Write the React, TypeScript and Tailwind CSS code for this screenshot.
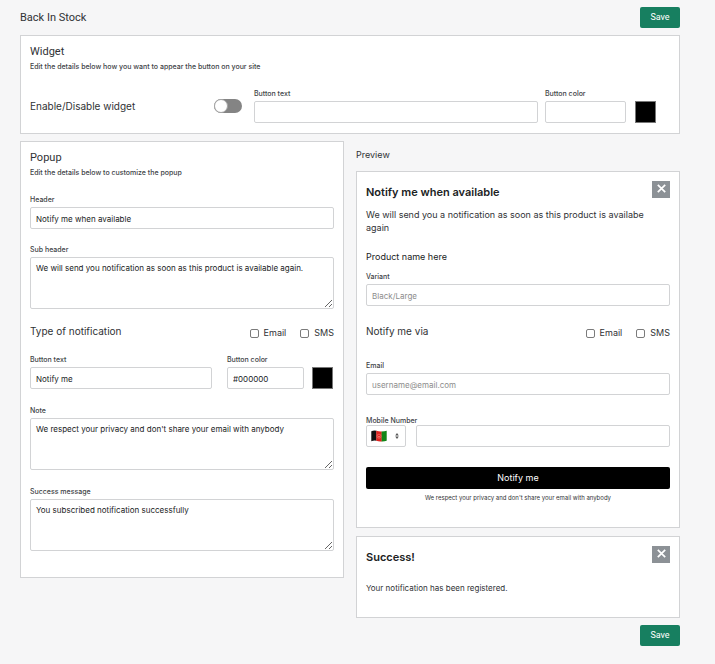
import React from "react";

const control =
  "block h-[22px] w-full rounded-[2px] border border-[#d2d3d5] bg-white px-[5px] pt-[2px] text-[8px] leading-[18px] text-[#202223] outline-none placeholder:text-[#8c8c8c]";
const card = "border border-[#d2d3d5] bg-white px-[9px] pt-[9px]";
const heading = "font-['Roboto',sans-serif] text-[11px] leading-[14px]";
const small = "text-[7px] leading-[10px] font-medium text-[#404346]";

function Field({
  id,
  label,
  className = "",
  ...rest
}: { id: string; label: string } & React.InputHTMLAttributes<HTMLInputElement>) {
  return (
    <div className={className}>
      <label htmlFor={id} className={`mb-[2px] block ${small}`}>
        {label}
      </label>
      <input id={id} type="text" className={control} {...rest} />
    </div>
  );
}

function Area({ id, label, value }: { id: string; label: string; value: string }) {
  return (
    <div className="mt-4">
      <label htmlFor={id} className={`mb-[2px] block ${small}`}>
        {label}
      </label>
      <textarea
        id={id}
        defaultValue={value}
        className="block h-[52px] w-full resize rounded-[2px] border border-[#d2d3d5] bg-white px-[5px] py-[5px] text-[8px] leading-[11px] text-[#202223] outline-none"
      />
    </div>
  );
}

function Swatch({ label }: { label: string }) {
  return (
    <input
      type="color"
      aria-label={label}
      defaultValue="#000000"
      className="block h-[22px] w-[21px] shrink-0 appearance-none border-0 bg-transparent p-0 [&::-webkit-color-swatch-wrapper]:p-0 [&::-webkit-color-swatch]:rounded-none [&::-webkit-color-swatch]:border [&::-webkit-color-swatch]:border-[#777777]"
    />
  );
}

function Tick({ label }: { label: string }) {
  return (
    <label className="flex items-center gap-[5px] text-[9px] leading-[14px]">
      <input
        type="checkbox"
        className="h-[9px] w-[9px] appearance-none rounded-[2px] border border-[#7b7b7b] bg-white checked:bg-[#177f60]"
      />
      {label}
    </label>
  );
}

function Channels({ title, className }: { title: string; className: string }) {
  return (
    <fieldset className={`flex items-start justify-between ${className}`}>
      <span className="text-[10px] leading-[14px]">{title}</span>
      <div className="mt-[2px] flex gap-[14px]">
        <Tick label="Email" />
        <Tick label="SMS" />
      </div>
    </fieldset>
  );
}

function SaveButton() {
  return (
    <button
      type="button"
      className="h-[21px] w-10 rounded-[2px] bg-[#177f60] pb-[2px] font-['Roboto',sans-serif] text-[9px] leading-[14px] text-white"
    >
      Save
    </button>
  );
}

function CloseButton() {
  return (
    <button type="button" aria-label="Close" className="flex h-[17px] w-[18px] shrink-0 justify-center bg-[#8c9196] pt-[3px]">
      <svg viewBox="0 0 9 9" className="h-[9px] w-[9px]" fill="none" stroke="white" strokeWidth="1.7">
        <path d="M0.8 0.8 8.2 8.2M8.2 0.8 0.8 8.2" />
      </svg>
    </button>
  );
}

function Flag() {
  return (
    <svg viewBox="0 0 16 12" className="pointer-events-none absolute top-[5px] left-[5px] h-3 w-4">
      <path d="M0.3 1.2Q3 .2 5.5 .8V10.8Q3 10.3 .3 11.2Z" fill="#111" />
      <path d="M5.3.8Q8 1.7 10.8 1.5V11.4Q8 11.7 5.3 10.8Z" fill="#e0231f" />
      <path d="M10.6 1.5Q13.5 1.5 15.7.8V10.8Q13.5 11.5 10.6 11.4Z" fill="#128516" />
      <circle cx="8" cy="6.2" r="2" fill="none" stroke="#ee6a62" strokeWidth="0.8" />
      <path d="M7 6h2v1.3H7z" fill="#ee6a62" />
    </svg>
  );
}

export default function App() {
  return (
    <main className="min-h-screen bg-[#f6f6f7] pt-[7px] pr-[35px] pb-[18px] pl-5 font-['Inter',sans-serif] text-[#303235]">
      <header className="flex items-start justify-between">
        <h1 className={`pt-1 ${heading}`}>Back In Stock</h1>
        <SaveButton />
      </header>

      <section className={`${card} mt-[7px] pb-[10px]`}>
        <h2 className={heading}>Widget</h2>
        <p className={`mt-[3px] ${small}`}>Edit the details below how you want to appear the button on your site</p>
        <div className="mt-[17px] flex items-end pr-[14px]">
          <div className="mb-[10px] flex w-[212px] items-center justify-between text-[10px] leading-[14px]">
            <label htmlFor="enable">Enable/Disable widget</label>
            <input
              id="enable"
              type="checkbox"
              role="switch"
              className="flex h-[14px] w-7 appearance-none rounded-full bg-[#848484] before:h-[14px] before:w-[14px] before:rounded-full before:border before:border-[#a4a4a4] before:bg-white checked:justify-end checked:bg-[#177f60]"
            />
          </div>
          <Field id="w-text" label="Button text" className="ml-3 flex-1" />
          <Field id="w-color" label="Button color" className="mr-[9px] ml-[7px] w-[81px]" />
          <Swatch label="Widget button color" />
        </div>
      </section>

      <div className="mt-[7px] grid grid-cols-2 items-start gap-3">
        <section className={`${card} pb-[26px]`}>
          <h2 className={heading}>Popup</h2>
          <p className={`mt-[3px] ${small}`}>Edit the details below to customize the popup</p>
          <Field id="p-header" label="Header" defaultValue="Notify me when available" className="mt-[17px]" />
          <Area
            id="p-sub"
            label="Sub header"
            value="We will send you notification as soon as this product is available again."
          />
          <Channels title="Type of notification" className="mt-[15px]" />
          <div className="mt-[15px] flex items-end pr-[1px]">
            <Field id="p-text" label="Button text" defaultValue="Notify me" className="mr-[15px] flex-1" />
            <Field id="p-color" label="Button color" defaultValue="#000000" className="mr-2 w-[77px]" />
            <Swatch label="Popup button color" />
          </div>
          <div className="pt-[1px]">
            <Area id="p-note" label="Note" value="We respect your privacy and don't share your email with anybody" />
          </div>
          <div className="pt-[1px]">
            <Area id="p-success" label="Success message" value="You subscribed notification successfully" />
          </div>
        </section>

        <div>
          <h2 className="mt-[7px] text-[9px] leading-[14px]">Preview</h2>
          <section className={`${card} mt-[9px] pb-[24px]`}>
            <div className="flex items-start justify-between">
              <h3 className="mt-[3px] text-[11px] leading-[16px] font-semibold text-[#202223]">Notify me when available</h3>
              <CloseButton />
            </div>
            <p className="mt-[8px] pr-5 text-[9px] leading-[13px]">
              We will send you a notification as soon as this product is availabe again
            </p>
            <p className="mt-4 text-[9px] leading-[14px] text-[#202223]">Product name here</p>
            <Field id="v-variant" label="Variant" placeholder="Black/Large" className="mt-[8px]" />
            <Channels title="Notify me via" className="mt-[18px]" />
            <Field id="v-email" label="Email" type="email" placeholder="username@email.com" className="mt-[21px]" />
            <div className="mt-[21px]">
              <label htmlFor="v-mobile" className="block text-[7px] leading-[9px] font-medium text-[#404346]">
                Mobile Number
              </label>
              <div className="flex gap-[10px]">
                <div className="relative w-10 shrink-0">
                  <select
                    aria-label="Country"
                    className="block h-[22px] w-full appearance-none rounded-[2px] border border-[#d2d3d5] bg-white text-[8px] text-transparent"
                  >
                    <option aria-label="Afghanistan" />
                  </select>
                  <Flag />
                  <svg viewBox="0 0 4 6" className="pointer-events-none absolute top-2 right-[7px] h-[6px] w-1" fill="#555">
                    <path d="M2 0 3.8 2.5H.2ZM2 6 .2 3.5H3.8Z" />
                  </svg>
                </div>
                <input id="v-mobile" type="tel" className={control} />
              </div>
            </div>
            <button type="button" className="mt-5 block h-[22px] w-full rounded-[2px] bg-black text-[9px] leading-[14px] text-white">
              Notify me
            </button>
            <p className="mt-1 text-center text-[6px] leading-[10px]">We respect your privacy and don't share your email with anybody</p>
          </section>

          <section className={`${card} mt-2 pb-[23px]`}>
            <div className="flex items-start justify-between">
              <h3 className="mt-[3px] text-[11px] leading-[16px] font-semibold text-[#202223]">Success!</h3>
              <CloseButton />
            </div>
            <p className="mt-[17px] text-[8px] leading-[12px]">Your notification has been registered.</p>
          </section>
        </div>
      </div>
      <div className="mt-[7px] flex justify-end">
        <SaveButton />
      </div>
    </main>
  );
}
